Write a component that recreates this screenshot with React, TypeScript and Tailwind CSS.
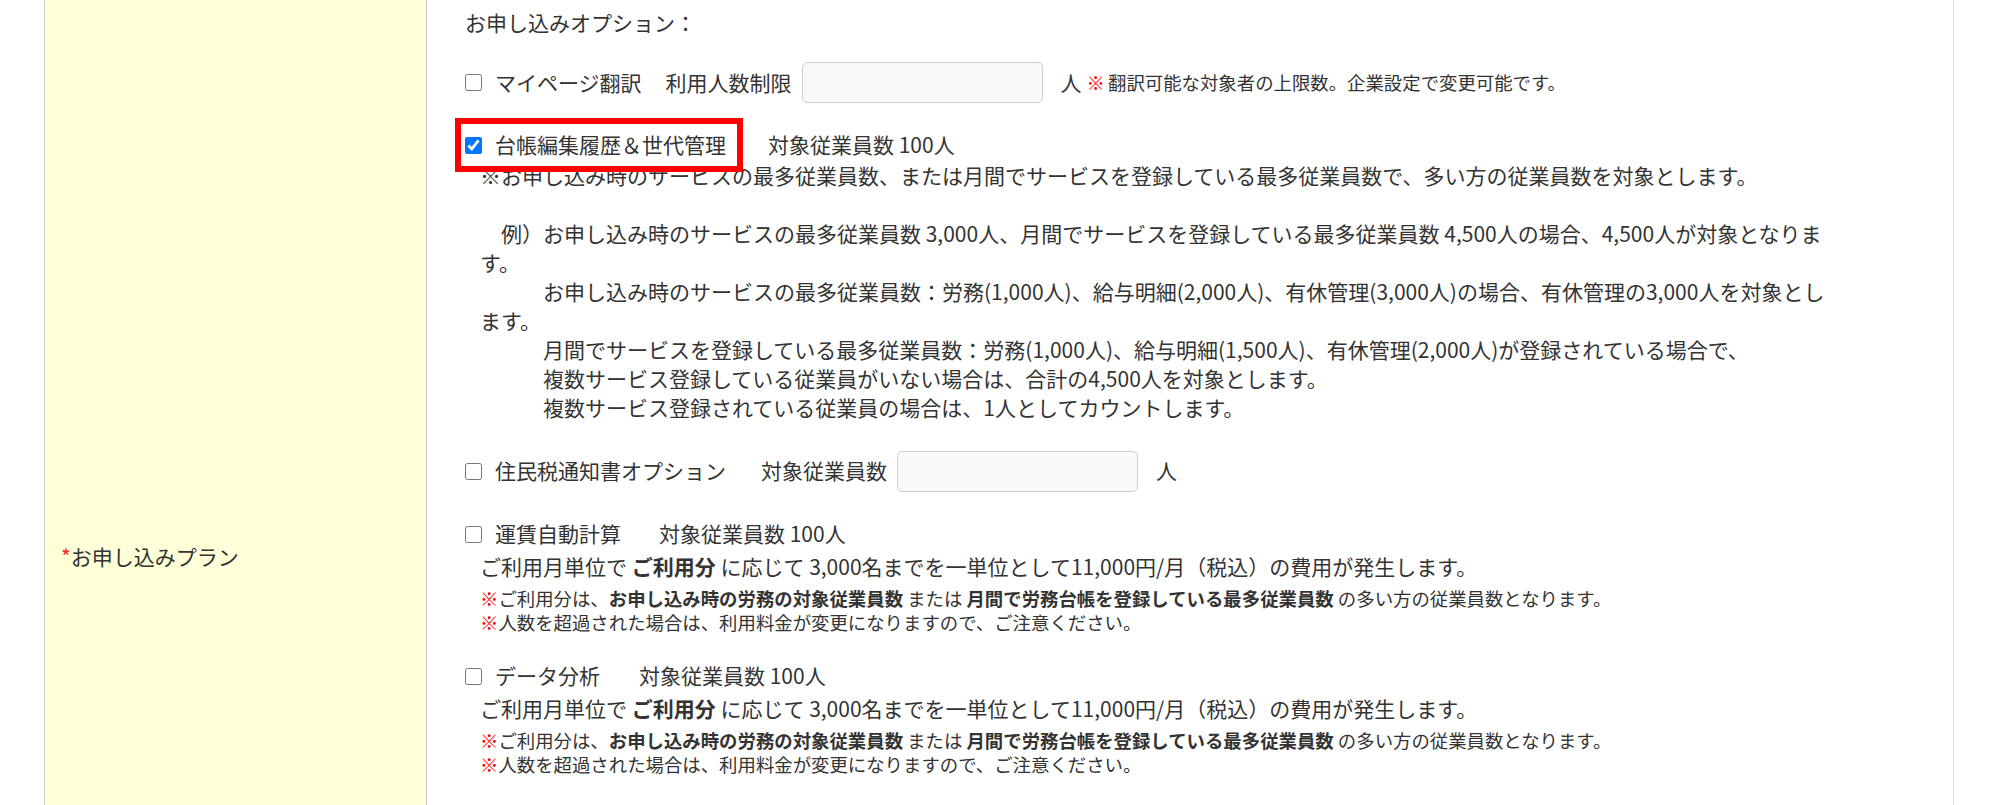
import React from "react";

function Red({ children }: { children: React.ReactNode }) {
  return <span className="text-[#ff0000]">{children}</span>;
}

function Checkbox({ checked }: { checked?: boolean }) {
  return (
    <input
      type="checkbox"
      defaultChecked={checked}
      className="m-0 h-[17px] w-[17px] shrink-0"
    />
  );
}

function NumInput() {
  return (
    <input
      type="text"
      className="h-[41px] w-[241px] shrink-0 rounded-[5px] border border-[#cfcfcf] bg-[#f9f9f9] px-2"
    />
  );
}

function UsageBlock({ name, gapClass }: { name: string; gapClass: string }) {
  return (
    <div className="mt-[26px]">
      <div className="flex h-[32px] items-center">
        <Checkbox />
        <span className="ml-[13px]">{name}</span>
        <span className={gapClass}>対象従業員数 100人</span>
      </div>
      <div className="ml-[15px] whitespace-nowrap leading-[32px]">
        ご利用月単位で <b className="font-bold">ご利用分</b> に応じて
        3,000名までを一単位として11,000円/月（税込）の費用が発生します。
      </div>
      <div className="ml-[15px] mt-[4px] whitespace-nowrap text-[18.4px] leading-[24px]">
        <div>
          <Red>※</Red>ご利用分は、
          <b className="font-bold">お申し込み時の労務の対象従業員数</b> または{" "}
          <b className="font-bold">月間で労務台帳を登録している最多従業員数</b>{" "}
          の多い方の従業員数となります。
        </div>
        <div>
          <Red>※</Red>人数を超過された場合は、利用料金が変更になりますので、ご注意ください。
        </div>
      </div>
    </div>
  );
}

export default function App() {
  return (
    <div className="h-[805px] w-[2000px] overflow-hidden bg-white font-['Noto_Sans_CJK_JP','Noto_Sans',sans-serif] text-[21px] text-[#333]">
      <div className="ml-[44px] flex h-full w-[1910px] border-l border-r border-l-[#c8c8c8] border-r-[#dcdcdc]">
        {/* label cell */}
        <div className="w-[382px] shrink-0 border-r border-[#c8c8c8] bg-[#ffffd8] pl-[16px] pt-[542px]">
          <div className="leading-[28px]">
            <span className="text-[#ff2020]">*</span>お申し込みプラン
          </div>
        </div>

        {/* content cell */}
        <div className="min-w-0 flex-1 bg-white pl-[38px] pt-[8px]">
          <div className="leading-[28px]">お申し込みオプション：</div>

          {/* row 1 */}
          <div className="mt-[26px] flex h-[41px] items-center whitespace-nowrap">
            <Checkbox />
            <span className="ml-[13px]">マイページ翻訳</span>
            <span className="ml-[24px]">利用人数制限</span>
            <div className="ml-[10px]">
              <NumInput />
            </div>
            <span className="ml-[18px]">人</span>
            <span className="ml-[5px] text-[18.4px]">
              <Red>※</Red>
              <span className="ml-[3px]">翻訳可能な対象者の上限数。企業設定で変更可能です。</span>
            </span>
          </div>

          {/* row 2 */}
          <div className="mt-[26px] flex h-[32px] items-center whitespace-nowrap">
            <div className="relative flex items-center">
              <Checkbox checked />
              <span className="ml-[13px]">台帳編集履歴＆世代管理</span>
              <div className="pointer-events-none absolute -bottom-[11px] -left-[10px] -right-[17px] -top-[11px] border-[6px] border-[#ff0000]" />
            </div>
            <span className="ml-[42px]">対象従業員数 100人</span>
          </div>

          <div className="ml-[15px] whitespace-nowrap leading-[29px]">
            <div>※お申し込み時のサービスの最多従業員数、または月間でサービスを登録している最多従業員数で、多い方の従業員数を対象とします。</div>
            <div className="h-[29px]" />
            <div>　例）お申し込み時のサービスの最多従業員数 3,000人、月間でサービスを登録している最多従業員数 4,500人の場合、4,500人が対象となりま</div>
            <div>す。</div>
            <div>　　　お申し込み時のサービスの最多従業員数：労務(1,000人)、給与明細(2,000人)、有休管理(3,000人)の場合、有休管理の3,000人を対象とし</div>
            <div>ます。</div>
            <div>　　　月間でサービスを登録している最多従業員数：労務(1,000人)、給与明細(1,500人)、有休管理(2,000人)が登録されている場合で、</div>
            <div>　　　複数サービス登録している従業員がいない場合は、合計の4,500人を対象とします。</div>
            <div>　　　複数サービス登録されている従業員の場合は、1人としてカウントします。</div>
          </div>

          {/* row: 住民税 */}
          <div className="mt-[28px] flex h-[42px] items-center whitespace-nowrap">
            <Checkbox />
            <span className="ml-[13px]">住民税通知書オプション</span>
            <span className="ml-[35px]">対象従業員数</span>
            <div className="ml-[10px]">
              <NumInput />
            </div>
            <span className="ml-[18px]">人</span>
          </div>

          <UsageBlock name="運賃自動計算" gapClass="ml-[38px]" />
          <UsageBlock name="データ分析" gapClass="ml-[39px]" />
        </div>
      </div>
    </div>
  );
}
